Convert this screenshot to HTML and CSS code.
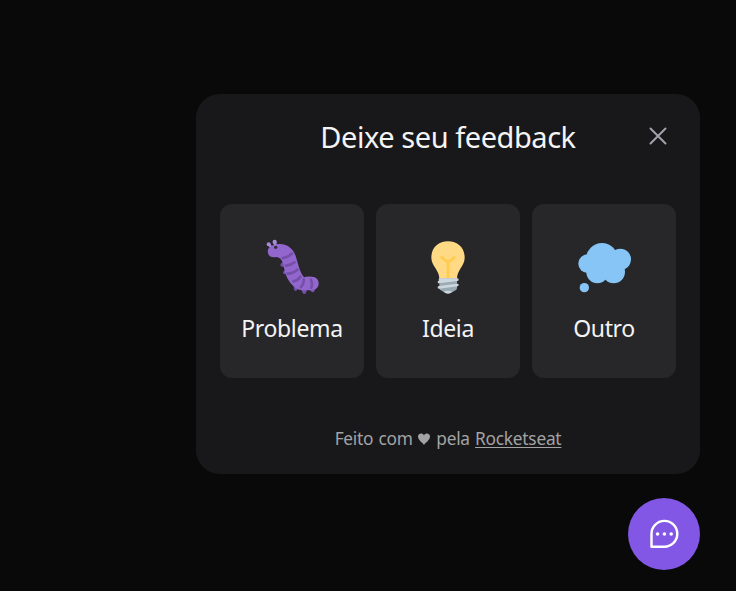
FILE: index.html
```html
<!DOCTYPE html>
<html lang="pt-BR">
<head>
<meta charset="utf-8">
<title>Feedback</title>
<link rel="stylesheet" href="styles.css">
</head>
<body>
<div class="widget">
  <section class="panel">
    <header class="header">
      <h1 class="title">Deixe seu feedback</h1>
      <button class="close" aria-label="Fechar">
        <svg width="18" height="18" viewBox="0 0 18 18"><path d="M1.5 1.5l15 15M16.5 1.5l-15 15"/></svg>
      </button>
    </header>
    <div class="options">
      <button class="option">
        <svg class="icon" viewBox="36 15 180 180">
          <g fill="#a98ad8"><circle cx="56" cy="43" r="6"/><circle cx="74" cy="36" r="6.5"/><path d="M53 44l9 12 6-5-8-10zM70 37l2 11 8-1-1-11z"/></g>
          <path fill="#7450a8" d="M98 97q-8 4-7 9 2 6 12 4zM105 120q-7 4-6 9 3 6 13 3zM131 170q1 13 6 13t8-8zM154 178q3 14 9 14t7-12zM180 178q3 9 9 9t6-12z"/>
          <path fill="#9266cc" d="M54 69C50 53 65 45 84 42C111 39 131 57 137 78C145 103 149 127 162 142Q169 139 185 140C200 140 207 151 206 163C204 178 190 183 175 181C155 183 137 178 127 165C109 147 105 126 100 105C97 90 90 82 78 81C66 84 56 79 54 69Z"/>
          <path class="stripe" d="M98 84Q114 82 126 70M108 107Q123 106 134 97M113 131Q130 130 142 119M130 154Q144 151 151 140M153 171Q163 160 161 148M184 173Q188 162 183 149"/>
          <circle cx="77" cy="52" r="5" fill="#292f33"/>
        </svg>
        <span class="label problem">Problema</span>
      </button>
      <button class="option">
        <svg class="icon" viewBox="39 15 180 180">
          <path fill="#ffd983" d="M179 83C179 53 158 34 129 34S79 53 79 83C79 108 103 119 103 147H156C156 119 179 108 179 83Z"/>
          <path class="filament" d="M110 82L129 97L148 82M129 97V145"/>
          <path fill="#99aab5" d="M103 145H156V174Q156 181 149 182Q138 190 129 190T110 182Q103 181 103 174Z"/>
          <path class="band-light" d="M105 149H152M102 156L157 149M102 172L157 165"/>
          <path fill="#ccd6dd" d="M116 185Q129 179 142 185Q135 191 129 191T116 185Z"/>
        </svg>
        <span class="label idea">Ideia</span>
      </button>
      <button class="option">
        <svg class="icon" viewBox="42 15 180 180">
          <g fill="#86c5f5"><circle cx="126" cy="87" r="48"/><circle cx="181" cy="88" r="32"/><circle cx="83" cy="101" r="28"/><circle cx="112" cy="127" r="33"/><circle cx="161" cy="126" r="34"/><circle cx="73" cy="173" r="14"/></g>
        </svg>
        <span class="label other">Outro</span>
      </button>
    </div>
    <footer class="footer">Feito com <svg class="heart" width="12" height="12" viewBox="0 0 12 12"><path d="M6 12C4.5 9.5 0 7 0 3.5C0 .3 4.3-.9 6 2.2C7.7-.9 12 .3 12 3.5C12 7 7.5 9.5 6 12Z"/></svg> pela <a href="#">Rocketseat</a></footer>
  </section>
  <button class="launcher" aria-label="Feedback">
    <svg width="30" height="30" viewBox="0 0 30 30"><path d="M2.5 27.7V15A12.9 12.9 0 1 1 15.4 27.7Z"/><g><circle cx="8.6" cy="15" r="1.8"/><circle cx="15.4" cy="15" r="1.8"/><circle cx="22.2" cy="15" r="1.8"/></g></svg>
  </button>
</div>
</body>
</html>
```
FILE: styles.css
```css
* { box-sizing: border-box; }
body {
  margin: 0;
  height: 591px;
  overflow: hidden;
  background: #09090a;
  color: #f4f4f5;
  font-family: "Noto Sans", "Open Sans", sans-serif;
}
button { border: 0; padding: 0; color: inherit; font: inherit; }
svg { display: block; }
.widget {
  height: 100%;
  padding: 0 36px 21px 0;
  display: flex;
  flex-direction: column;
  align-items: flex-end;
  justify-content: flex-end;
  gap: 24px;
}
.panel {
  width: 504px;
  height: 380px;
  padding: 24px;
  border-radius: 24px;
  background: #18181b;
  display: flex;
  flex-direction: column;
}
.header {
  height: 38px;
  display: grid;
  grid-template-columns: 36px 1fr 36px;
  align-items: center;
}
.title {
  grid-column: 2;
  margin: 0;
  text-align: center;
  font-size: 29px;
  font-weight: 400;
  line-height: 38px;
  letter-spacing: -0.45px;
  white-space: nowrap;
}
.close { background: none; justify-self: center; margin-bottom: 2px; }
.close path { fill: none; stroke: #a1a1aa; stroke-width: 2; stroke-linecap: round; }
.options {
  display: grid;
  grid-template-columns: repeat(3, 1fr);
  gap: 12px;
  margin-top: 48px;
}
.option {
  height: 174px;
  padding-top: 31px;
  border-radius: 12px;
  background: #27272a;
  display: flex;
  flex-direction: column;
  align-items: center;
  gap: 16px;
}
.icon { width: 60px; height: 60px; }
.stripe { fill: none; stroke: #7450a8; stroke-width: 8; stroke-linecap: round; }
.filament { fill: none; stroke: #ffcc4d; stroke-width: 8; stroke-linecap: round; stroke-linejoin: round; }
.band-light { fill: none; stroke: #ccd6dd; stroke-width: 8; stroke-linecap: round; }
.label { font-size: 23px; line-height: 34px; letter-spacing: -0.35px; }
.footer {
  margin-top: 48px;
  display: flex;
  align-items: center;
  justify-content: center;
  color: #a3a3a3;
  font-size: 17.3px;
  line-height: 26px;
  letter-spacing: -0.24px;
  word-spacing: 1px;
  white-space: pre;
}
.heart { fill: #a3a3a3; margin-right: 1px; }
.footer a { color: inherit; text-underline-offset: 2px; text-decoration-thickness: 1px; }
.launcher {
  width: 72px;
  height: 72px;
  border-radius: 50%;
  background: #8257e5;
  display: flex;
  align-items: center;
  justify-content: center;
}
.launcher path { fill: none; stroke: #fff; stroke-width: 2.4; stroke-linejoin: round; }
.launcher g { fill: #fff; }
```
